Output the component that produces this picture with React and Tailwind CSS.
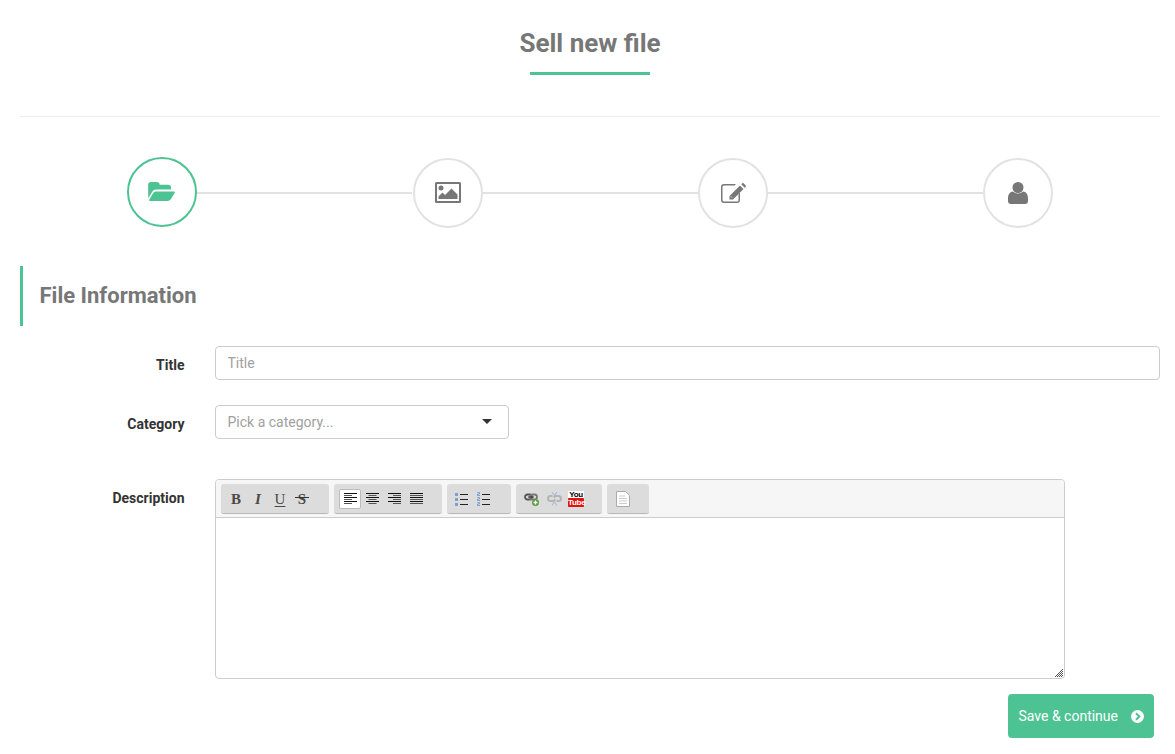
const Folder = () => (
  <svg className="mr-0.5" width="27" height="20" viewBox="0 0 28 21" fill="#4dc393">
    <path d="M0 3 a3 3 0 0 1 3-3 h6 a3 3 0 0 1 3 3 h9 a3 3 0 0 1 3 3 v2 H8 a4 4 0 0 0-3.500 2 L0 17z" />
    <path d="M8.500 10 H27 a1 1 0 0 1 .8 1.500 l-4 6.600 a4.500 4.500 0 0 1-3.400 1.900 H2 a1 1 0 0 1-.8-1.500 l4-6.600 A3.500 3.500 0 0 1 8.500 10z" />
  </svg>
);
const Picture = () => (
  <svg width="26" height="21" viewBox="0 0 26 21" fill="#777">
    <path fillRule="evenodd" d="M1.500 0h23A1.500 1.500 0 0 1 26 1.500v18a1.500 1.500 0 0 1-1.500 1.500h-23A1.500 1.500 0 0 1 0 19.500v-18A1.500 1.500 0 0 1 1.500 0zM2 2v17h22V2z" />
    <circle cx="6" cy="6" r="2.500" />
    <path d="M3.500 17v-2.500l4-4 2.500 2.500 6.500-6.500 6 6V17z" />
  </svg>
);
const Edit = () => (
  <svg width="25" height="20" viewBox="0 0 25 20" fill="#777">
    <path d="M3 1h12l-1.500 1.500H3A1.500 1.500 0 0 0 1.500 4v13A1.500 1.500 0 0 0 3 18.500h13a1.500 1.500 0 0 0 1.500-1.500v-6l1.500-1.500V17a3 3 0 0 1-3 3H3a3 3 0 0 1-3-3V4a3 3 0 0 1 3-3z" />
    <path d="M19 2.500l3.500 3.500L12 16.500H8.500V13zM20.300 1.300l1-1a1 1 0 0 1 1.300 0l2.100 2.100a1 1 0 0 1 0 1.300l-1 1z" />
    <path d="M10 13.500l1 1" stroke="#fff" />
  </svg>
);
const User = () => (
  <svg className="mt-px" width="20" height="22" viewBox="0 0 20 22" fill="#777">
    <circle cx="10" cy="5.500" r="5.500" />
    <path d="M5 9.500c1.300 1.300 3 2 5 2s3.700-.7 5-2c3 .3 5 2.500 5 7v2.500a3 3 0 0 1-3 3H3a3 3 0 0 1-3-3v-2.500c0-4.500 2-6.700 5-7z" />
  </svg>
);
const Arrow = () => (
  <svg width="13" height="13" viewBox="0 0 13 13">
    <circle cx="6.500" cy="6.500" r="6.500" fill="#fff" />
    <path d="M5 3.200L8.300 6.500 5 9.800" fill="none" stroke="#4dc393" strokeWidth="2" />
  </svg>
);

const Step = ({ active, className = "", children }) => (
  <div className={`flex h-[70px] w-[70px] shrink-0 items-center justify-center rounded-full border-2 bg-white ${active ? "self-start border-[#4dc393]" : "border-[#e2e2e2]"} ${className}`}>
    {children}
  </div>
);
const Connector = () => <div className="h-0.5 flex-1 bg-[#e2e2e2]" />;

const Lines = ({ kind }) => {
  const rows = {
    left: [[0, 13], [0, 8], [0, 13], [0, 8], [0, 13], [0, 8]],
    center: [[0, 13], [2.500, 8], [0, 13], [2.500, 8], [0, 13], [2.500, 8]],
    right: [[0, 13], [5, 8], [0, 13], [5, 8], [0, 13], [5, 8]],
    full: [[0, 13], [0, 13], [0, 13], [0, 13], [0, 13], [0, 13]],
  }[kind];
  return (
    <svg width="13" height="12" viewBox="0 0 13 12">
      {rows.map(([x, w], i) => (
        <rect key={i} x={x} y={i * 2} width={w} height="1" fill={i % 2 ? "#555" : "#111"} />
      ))}
    </svg>
  );
};
const Btn = ({ active, children }) => (
  <div className={`flex h-5 w-[22px] items-center justify-center rounded-[2px] pt-px ${active ? "border border-[#bbb] bg-white" : ""}`}>
    {children}
  </div>
);
const Group = ({ className, children }) => (
  <div className={`flex h-[30px] items-center rounded-[3px] border-b border-[#b8b8b8] bg-[#dcdcdc] ${className}`}>
    {children}
  </div>
);
const Glyph = ({ className, children }) => (
  <span className={`font-['Liberation_Serif',serif] text-[15px] leading-none text-[#4a4a4a] ${className}`}>{children}</span>
);

const Bullets = () => (
  <svg width="13" height="13" viewBox="0 0 13 13">
    {[1, 6, 11].map((y) => (
      <g key={y}>
        <rect x="0" y={y - 1} width="3" height="3" fill="#7f9fd0" />
        <rect x="5" y={y} width="8" height="1" fill="#222" />
      </g>
    ))}
  </svg>
);
const Numbers = () => (
  <svg width="13" height="15" viewBox="0 0 13 15">
    {[2, 7, 12].map((y) => (
      <g key={y}>
        <path d={`M0.500 ${y - 1.500}h2v1.500h-2v1.500h2.500`} fill="none" stroke="#7f9fd0" />
        <rect x="5" y={y} width="8" height="1" fill="#222" />
      </g>
    ))}
  </svg>
);
const LinkAdd = () => (
  <svg width="16" height="15" viewBox="0 0 16 15">
    <rect x="1" y="2.500" width="7" height="5" rx="2.500" fill="none" stroke="#555" strokeWidth="1.800" />
    <rect x="6" y="2.500" width="7" height="5" rx="2.500" fill="none" stroke="#777" strokeWidth="1.800" />
    <rect x="4" y="4.500" width="6" height="1" fill="#333" />
    <circle cx="11.500" cy="10.500" r="3.500" fill="#5a9e3c" />
    <path d="M11.500 8.500v4M9.500 10.500h4" stroke="#fff" strokeWidth="1.300" />
  </svg>
);
const Unlink = () => (
  <svg width="15" height="14" viewBox="0 0 15 14" fill="none">
    <path d="M5.500 4H3.500a2.500 2.500 0 0 0 0 5h3l2-1.500M9.500 9h2a2.500 2.500 0 0 0 0-5h-3l-2 1.500" stroke="#b4b4b4" strokeWidth="2" />
    <path d="M5 0l2.500 3.500L10 0M5 13.500l2.500-3.500L10 13.500" stroke="#a9bcdc" strokeWidth="1.200" />
  </svg>
);
const YouTube = () => (
  <div className="flex w-4 flex-col items-center font-['Liberation_Sans',sans-serif] text-[8px] font-bold tracking-[-0.3px]">
    <span className="h-[7px] w-full bg-white text-center leading-[7px] text-black">You</span>
    <span className="h-[9px] w-full rounded-[1px] bg-[#e3120b] text-center leading-[9px] text-white">Tube</span>
  </div>
);
const Doc = () => (
  <svg width="14" height="16" viewBox="0 0 14 16">
    <path d="M.500.500h9l4 4v11H.500z" fill="#fff" stroke="#aaa" />
    <path d="M3 5h6M3 7.500h8M3 10h8M3 12.500h8" stroke="#ccc" />
  </svg>
);

const Label = ({ className, children }) => (
  <label className={`w-[164.5px] shrink-0 text-right text-sm leading-5 font-bold text-[#333] ${className}`}>{children}</label>
);

export default function App() {
  return (
    <div className="bg-white pr-[15px] pl-5 font-['Roboto',sans-serif]">
      <header className="flex h-[117px] flex-col items-center border-b border-[#eee] pt-[28px]">
        <h1 className="text-[26px] leading-[30px] font-bold text-[#777]">Sell new file</h1>
        <div className="mt-[14px] h-[3px] w-[120px] bg-[#4dc393]" />
      </header>

      <div className="mt-10 flex h-[71px] items-center px-[107px]">
        <Step active><Folder /></Step>
        <Connector />
        <Step className="ml-px"><Picture /></Step>
        <Connector />
        <Step><Edit /></Step>
        <Connector />
        <Step><User /></Step>
      </div>

      <h2 className="mt-[38px] flex h-[60px] items-center border-l-[3px] border-[#4dc393] pb-0.5 pl-[16.5px] text-[22px] font-bold text-[#777]">
        File Information
      </h2>

      <div className="mt-5 flex items-start gap-[30.5px]">
        <Label className="pt-[9px]">Title</Label>
        <input
          placeholder="Title"
          className="h-[34px] flex-1 rounded border border-[#ccc] px-[11.5px] text-sm text-[#555] outline-none placeholder:text-[#a0a0a0]"
        />
      </div>

      <div className="mt-[25px] flex items-start gap-[30.5px]">
        <Label className="pt-[9px]">Category</Label>
        <div className="flex h-[34px] w-[294px] items-center justify-between rounded border border-[#ccc] pr-[16px] pl-[11.5px] text-sm text-[#a0a0a0]">
          <span>Pick a category...</span>
          <span className="mb-0.5 h-0 w-0 border-x-[5.5px] border-t-[5px] border-x-transparent border-t-[#333]" />
        </div>
      </div>

      <div className="mt-10 flex items-start gap-[30.5px]">
        <Label className="pt-[9px]">Description</Label>
        <div className="relative h-[200px] w-[850px] overflow-hidden rounded border border-[#ccc]">
          <div className="flex h-[38px] items-start gap-[5px] border-b border-[#ccc] bg-[#f6f6f6] pt-1 pl-[5px]">
            <Group className="w-[108px] pl-1">
              <Btn><Glyph className="font-bold">B</Glyph></Btn>
              <Btn><Glyph className="font-bold italic">I</Glyph></Btn>
              <Btn><Glyph className="underline underline-offset-2">U</Glyph></Btn>
              <Btn>
                <span className="relative">
                  <Glyph className="font-bold">S</Glyph>
                  <span className="absolute top-[10px] -left-[3px] h-px w-[14px] bg-[#333]" />
                </span>
              </Btn>
            </Group>
            <Group className="w-[108px] pl-[5px]">
              <Btn active><Lines kind="left" /></Btn>
              <Btn><Lines kind="center" /></Btn>
              <Btn><Lines kind="right" /></Btn>
              <Btn><Lines kind="full" /></Btn>
            </Group>
            <Group className="w-[64px] pl-[3px]">
              <Btn><Bullets /></Btn>
              <Btn><Numbers /></Btn>
            </Group>
            <Group className="w-[86px] pl-[5px]">
              <Btn><LinkAdd /></Btn>
              <Btn><Unlink /></Btn>
              <Btn><YouTube /></Btn>
            </Group>
            <Group className="w-[42px] pl-[5px]">
              <Btn><Doc /></Btn>
            </Group>
          </div>
          <svg className="absolute right-0 bottom-0" width="10" height="10" viewBox="0 0 10 10" stroke="#555">
            <path d="M1 9l8-8M3 9l6-6M5 9l4-4M7 9l2-2" />
          </svg>
        </div>
      </div>

      <div className="mt-[15px] flex justify-end pr-1.5 pb-4">
        <button className="flex h-11 w-[146px] items-center justify-between rounded bg-[#4dc393] pr-[10px] pl-[10.5px] text-sm text-white">
          Save &amp; continue
          <Arrow />
        </button>
      </div>
    </div>
  );
}
